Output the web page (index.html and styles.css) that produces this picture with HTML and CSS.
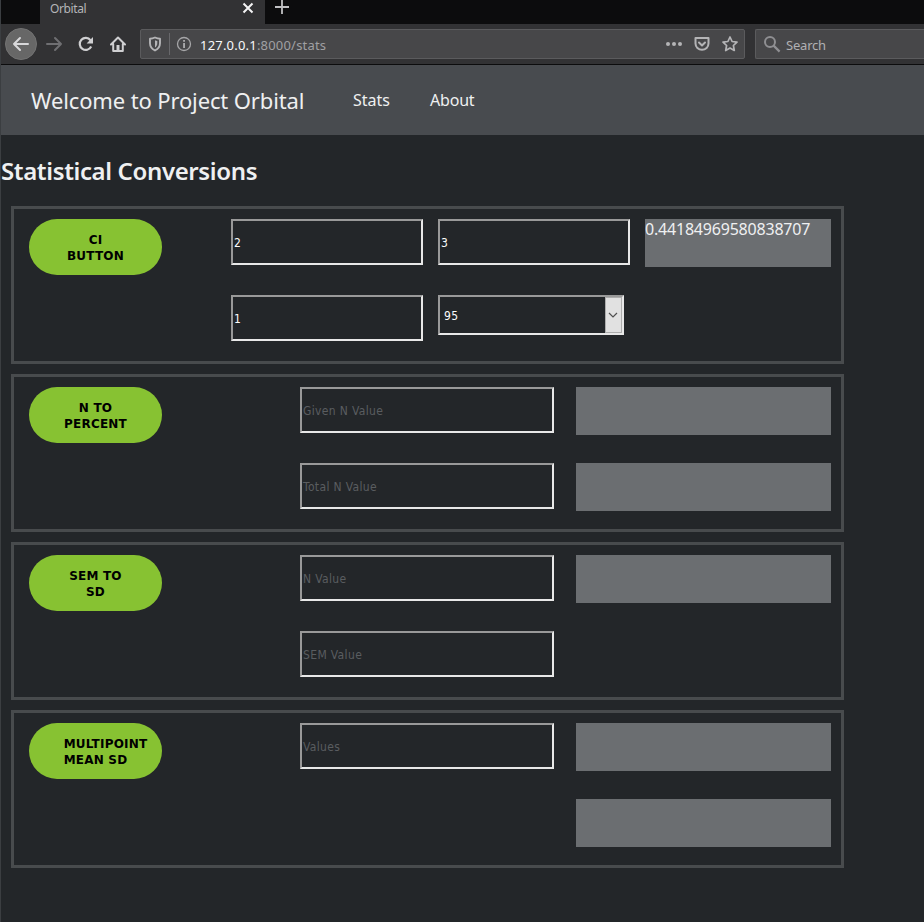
FILE: index.html
```html
<!DOCTYPE html>
<html lang="en">
<head>
<meta charset="utf-8">
<title>Orbital</title>
<link rel="stylesheet" href="styles.css">
</head>
<body>
<div class="window">
  <div class="tabs">
    <div class="tab"><span class="tab-title">Orbital</span>
      <svg class="close" width="12" height="12" viewBox="0 0 12 12"><path d="M1.500 1.500l9 9M10.500 1.500l-9 9" stroke="#f4f4f5" stroke-width="2"/></svg>
    </div>
    <svg class="plus" width="14" height="14" viewBox="0 0 14 14"><path d="M7 0v14M0 7h14" stroke="#c0c0c2" stroke-width="1.800"/></svg>
  </div>
  <div class="toolbar">
    <div class="back"><svg width="18" height="16" viewBox="0 0 18 16" fill="none" stroke="#d8d8da" stroke-width="2" stroke-linecap="round" stroke-linejoin="round"><path d="M8 2L2 8l6 6M2 8h14"/></svg></div>
    <svg class="forward" width="18" height="16" viewBox="0 0 18 16" fill="none" stroke="#6f6f72" stroke-width="2" stroke-linecap="round" stroke-linejoin="round"><path d="M10 2l6 6-6 6M16 8H2"/></svg>
    <svg class="reload" width="16" height="16" viewBox="0 0 16 16"><path d="M13.200 10.500A6 6 0 1 1 12.500 4.200" fill="none" stroke="#cfcfd1" stroke-width="2.200"/><path d="M15 1v6.500H8.600z" fill="#cfcfd1"/></svg>
    <svg class="home" width="16" height="16" viewBox="0 0 16 16"><path d="M1 8.500L8 1.500l7 7M3.200 8v7h9.600V8" fill="none" stroke="#cfcfd1" stroke-width="2" stroke-linejoin="round" stroke-linecap="round"/><path d="M6.500 9h3v6h-3z" fill="#cfcfd1"/></svg>
    <div class="address">
      <svg class="shield" width="14" height="16" viewBox="0 0 14 16"><path d="M7 1.500c2 .9 3.500 1.200 5 1.200v4.500c0 3.500-1.800 5.600-5 7.300-3.200-1.700-5-3.800-5-7.300V2.700c1.500 0 3-.3 5-1.200z" fill="none" stroke="#b4b4b6" stroke-width="1.900" stroke-linejoin="round"/><path d="M7 4.300v7.200c1.600-1.200 2.300-2.600 2.300-4.600V5C8.500 5 7.700 4.700 7 4.300z" fill="#b4b4b6"/></svg>
      <span class="divider"></span>
      <svg class="info" width="16" height="16" viewBox="0 0 16 16"><circle cx="8" cy="8" r="6.500" fill="none" stroke="#a6a6a8" stroke-width="1.300"/><path d="M7.200 7h1.700v5H7.200zM7.200 4h1.700v1.800H7.200z" fill="#b4b4b6"/></svg>
      <span class="url"><b>127.0.0.1</b>:8000/stats</span>
      <svg class="dots" width="18" height="16" viewBox="0 0 18 16" fill="#b4b4b6"><circle cx="3" cy="8" r="2"/><circle cx="9" cy="8" r="2"/><circle cx="15" cy="8" r="2"/></svg>
      <svg class="pocket" width="16" height="16" viewBox="0 0 16 16" fill="none" stroke="#b4b4b6" stroke-width="2" stroke-linejoin="round" stroke-linecap="round"><path d="M1.500 2h13v5.500a6.500 6.300 0 0 1-13 0z"/><path d="M5 6.500l3 3 3-3"/></svg>
      <svg class="star" width="16" height="16" viewBox="0 0 16 16"><path d="M8 1l2.100 4.500 4.900.6-3.600 3.400.9 5L8 12.100l-4.300 2.400.9-5L1 6.100l4.900-.6z" fill="none" stroke="#b4b4b6" stroke-width="1.700" stroke-linejoin="round"/></svg>
    </div>
    <div class="search">
      <svg width="18" height="18" viewBox="0 0 18 18" fill="none" stroke="#8f8f92" stroke-width="2"><circle cx="7" cy="7" r="5"/><path d="M10.600 10.600l6 6" stroke-width="2.200"/></svg>
      <span>Search</span>
    </div>
  </div>
  <nav class="nav">
    <span class="brand">Welcome to Project Orbital</span>
    <a class="stats">Stats</a>
    <a class="about">About</a>
  </nav>
  <h1>Statistical Conversions</h1>
  <main class="panels">
    <section class="panel four">
      <button>CI<br>BUTTON</button>
      <div class="field c2">2</div>
      <div class="field">3</div>
      <div class="result"><span>0.44184969580838707</span></div>
      <div class="field c2">1</div>
      <div class="field select"><span>95</span><i><svg width="10" height="7" viewBox="0 0 10 7"><path d="M1 1l4 4 4-4" fill="none" stroke="#505050" stroke-width="1.200"/></svg></i></div>
    </section>
    <section class="panel">
      <button>N TO<br>PERCENT</button>
      <div class="field hint c2">Given N Value</div>
      <div class="result"></div>
      <div class="field hint c2">Total N Value</div>
      <div class="result"></div>
    </section>
    <section class="panel">
      <button>SEM TO<br>SD</button>
      <div class="field hint c2">N Value</div>
      <div class="result"></div>
      <div class="field hint c2">SEM Value</div>
    </section>
    <section class="panel">
      <button><span class="long">MULTIPOINT</span><br>MEAN SD</button>
      <div class="field hint c2">Values</div>
      <div class="result"></div>
      <div class="result c3"></div>
    </section>
  </main>
</div>
</body>
</html>
```
FILE: styles.css
```css
* { box-sizing: border-box; }
body { margin: 0; background: #232629; color: #eff0f1; font-family: "Noto Sans", sans-serif; overflow: hidden; }
svg { display: block; flex: none; }
.window { height: 922px; border-left: 1px solid #3b3e41; overflow: hidden; }
.tabs { height: 24px; background: #0c0c0d; display: flex; }
.tab { width: 225px; margin-left: 39px; background: #323234; display: flex; justify-content: space-between; padding: 0 11px 0 10px; }
.tab-title { font-size: 12px; line-height: 18px; color: #b5b5b8; letter-spacing: -0.4px; }
.close { margin-top: 2px; }
.plus { margin-left: 10px; }
.toolbar { height: 41px; background: #323234; border-bottom: 1px solid #0c0c0d; display: flex; align-items: center; }
.back { width: 32px; height: 32px; margin-left: 4px; border-radius: 50%; background: #676767; border: 1px solid #737373; display: flex; align-items: center; justify-content: center; }
.forward { margin-left: 8px; }
.reload { margin-left: 15px; }
.home { margin-left: 16px; }
.address { width: 605px; height: 30px; margin-left: 14px; border: 1px solid #5b5b5d; border-radius: 2px; background: #474749; display: flex; align-items: center; padding: 0 6px 0 7px; }
.divider { width: 1px; height: 22px; background: #68686b; margin: 0 6px 0 7px; }
.url { font-size: 13px; margin-left: 8px; color: #a0a0a3; line-height: 18px; padding-top: 2px; letter-spacing: 0.2px; }
.url b { font-weight: 400; color: #f9f9fa; }
.dots { margin-left: auto; }
.pocket { margin-left: 11px; }
.star { margin-left: 12px; }
.search { flex: 1; height: 30px; margin-left: 10px; border: 1px solid #5b5b5d; border-right: 0; border-radius: 2px 0 0 2px; background: #474749; display: flex; align-items: center; padding-left: 7px; font-size: 13px; color: #b0b0b3; }
.search span { margin-left: 5px; padding-top: 1px; letter-spacing: -0.2px; }
.nav { height: 70px; background: #484b4f; display: flex; align-items: center; }
.brand { width: 352px; padding-left: 30px; font-size: 22px; letter-spacing: -0.13px; white-space: nowrap; }
.nav a { font-size: 16px; }
.stats { width: 77px; }
.about { letter-spacing: -0.2px; }
h1 { margin: 18px 0 17px; font: 600 24px/36px "Noto Sans", sans-serif; letter-spacing: -0.37px; }
.panels { width: 833px; margin-left: 10px; display: grid; gap: 10px; }
.panel { height: 158px; border: 3px solid #484b4d; padding: 10px; display: grid; grid-template-columns: repeat(3, 1fr); grid-template-rows: 56px 56px; gap: 20px 21px; }
.four { grid-template-columns: repeat(4, 186px); }
button { width: 133px; height: 56px; margin: 0 0 0 5px; padding: 2px 0 0; border: 0; border-radius: 28px; background: #87c232; color: #000; font: 700 12px/16px "DejaVu Sans", sans-serif; letter-spacing: 0.2px; white-space: nowrap; }
.long { margin-left: 20px; }
.field { width: 254px; height: 46px; border: 2px solid; border-color: #999 #e8e8e8 #e8e8e8 #999; padding-left: 1px; font: 12px/45px "DejaVu Sans Condensed", "DejaVu Sans", sans-serif; font-stretch: condensed; letter-spacing: 0.35px; color: #fcfcfc; }
.four .field { width: 192px; }
.hint { color: #5a5d60; }
.c2 { grid-column: 2; }
.c3 { grid-column: 3; }
.result { height: 48px; background: #6b6e71; font-size: 16px; line-height: 21px; letter-spacing: -0.2px; }
.four .select { width: 186px; height: 40px; display: flex; justify-content: space-between; line-height: 39px; padding-left: 4px; }
.select i { width: 17px; height: 36px; background: #e1e1e1; border: 1px solid #adadad; display: flex; align-items: center; justify-content: center; }
.select svg { margin-left: -1px; }
```
